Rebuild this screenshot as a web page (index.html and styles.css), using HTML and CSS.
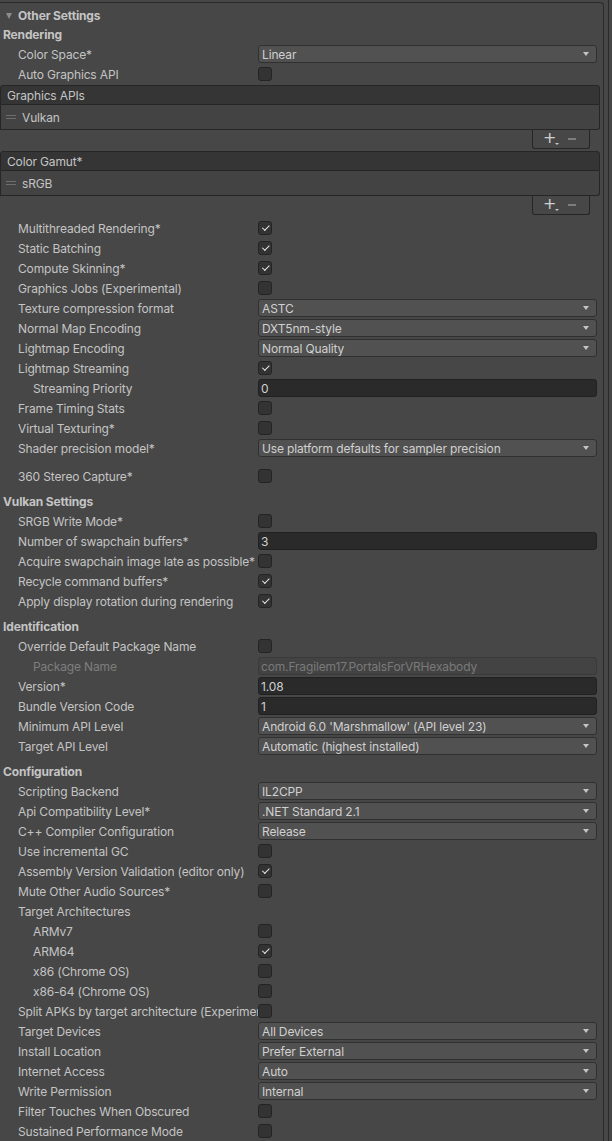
FILE: index.html
```html
<!DOCTYPE html>
<html>
<head>
<meta charset="utf-8">
<link rel="stylesheet" href="styles.css">
</head>
<body>
<div class="shell">
<div class="frame">
  <div class="foldout"><span class="tri"></span>Other Settings</div>
  <div class="section first">Rendering</div>
  <div class="row"><span class="label">Color Space*</span><div class="dd">Linear</div></div>
  <div class="row"><span class="label">Auto Graphics API</span><span class="cb"></span></div>

  <div class="list l1">
    <div class="list-head">Graphics APIs</div>
    <div class="list-body"><span class="handle"></span>Vulkan</div>
    <div class="list-foot"><span class="plus">+<i></i></span><span class="minus"></span></div>
  </div>
  <div class="list l2">
    <div class="list-head">Color Gamut*</div>
    <div class="list-body"><span class="handle"></span>sRGB</div>
    <div class="list-foot"><span class="plus">+<i></i></span><span class="minus"></span></div>
  </div>

  <div class="row after-list"><span class="label">Multithreaded Rendering*</span><span class="cb on"></span></div>
  <div class="row"><span class="label">Static Batching</span><span class="cb on"></span></div>
  <div class="row"><span class="label">Compute Skinning*</span><span class="cb on"></span></div>
  <div class="row"><span class="label">Graphics Jobs (Experimental)</span><span class="cb"></span></div>
  <div class="row"><span class="label">Texture compression format</span><div class="dd">ASTC</div></div>
  <div class="row"><span class="label">Normal Map Encoding</span><div class="dd">DXT5nm-style</div></div>
  <div class="row"><span class="label">Lightmap Encoding</span><div class="dd">Normal Quality</div></div>
  <div class="row"><span class="label">Lightmap Streaming</span><span class="cb on"></span></div>
  <div class="row"><span class="label indent">Streaming Priority</span><div class="tf">0</div></div>
  <div class="row"><span class="label">Frame Timing Stats</span><span class="cb"></span></div>
  <div class="row"><span class="label">Virtual Texturing*</span><span class="cb"></span></div>
  <div class="row"><span class="label">Shader precision model*</span><div class="dd">Use platform defaults for sampler precision</div></div>
  <div class="row gap"><span class="label">360 Stereo Capture*</span><span class="cb"></span></div>

  <div class="section">Vulkan Settings</div>
  <div class="row"><span class="label">SRGB Write Mode*</span><span class="cb"></span></div>
  <div class="row"><span class="label">Number of swapchain buffers*</span><div class="tf">3</div></div>
  <div class="row"><span class="label">Acquire swapchain image late as possible*</span><span class="cb"></span></div>
  <div class="row"><span class="label">Recycle command buffers*</span><span class="cb on"></span></div>
  <div class="row"><span class="label">Apply display rotation during rendering</span><span class="cb on"></span></div>

  <div class="section">Identification</div>
  <div class="row"><span class="label">Override Default Package Name</span><span class="cb"></span></div>
  <div class="row"><span class="label indent dim">Package Name</span><div class="tf disabled">com.Fragilem17.PortalsForVRHexabody</div></div>
  <div class="row"><span class="label">Version*</span><div class="tf">1.08</div></div>
  <div class="row"><span class="label">Bundle Version Code</span><div class="tf">1</div></div>
  <div class="row"><span class="label">Minimum API Level</span><div class="dd">Android 6.0 'Marshmallow' (API level 23)</div></div>
  <div class="row"><span class="label">Target API Level</span><div class="dd">Automatic (highest installed)</div></div>

  <div class="section">Configuration</div>
  <div class="row"><span class="label">Scripting Backend</span><div class="dd">IL2CPP</div></div>
  <div class="row"><span class="label">Api Compatibility Level*</span><div class="dd">.NET Standard 2.1</div></div>
  <div class="row"><span class="label">C++ Compiler Configuration</span><div class="dd">Release</div></div>
  <div class="row"><span class="label">Use incremental GC</span><span class="cb"></span></div>
  <div class="row"><span class="label">Assembly Version Validation (editor only)</span><span class="cb on"></span></div>
  <div class="row"><span class="label">Mute Other Audio Sources*</span><span class="cb"></span></div>
  <div class="row"><span class="label">Target Architectures</span></div>
  <div class="row"><span class="label indent">ARMv7</span><span class="cb"></span></div>
  <div class="row"><span class="label indent">ARM64</span><span class="cb on"></span></div>
  <div class="row"><span class="label indent">x86 (Chrome OS)</span><span class="cb"></span></div>
  <div class="row"><span class="label indent">x86-64 (Chrome OS)</span><span class="cb"></span></div>
  <div class="row"><span class="label">Split APKs by target architecture (Experimental)</span><span class="cb"></span></div>
  <div class="row"><span class="label">Target Devices</span><div class="dd">All Devices</div></div>
  <div class="row"><span class="label">Install Location</span><div class="dd">Prefer External</div></div>
  <div class="row"><span class="label">Internet Access</span><div class="dd">Auto</div></div>
  <div class="row"><span class="label">Write Permission</span><div class="dd">Internal</div></div>
  <div class="row"><span class="label">Filter Touches When Obscured</span><span class="cb"></span></div>
  <div class="row"><span class="label">Sustained Performance Mode</span><span class="cb"></span></div>
</div>
</div>
</body>
</html>
```
FILE: styles.css
```css
html, body {
  margin: 0;
  padding: 0;
  background: #474747;
}
body {
  font-family: Inter, "Noto Sans", "Liberation Sans", sans-serif;
  font-size: 12px;
  letter-spacing: -0.15px;
  color: #c4c4c4;
  overflow: hidden;
}
.shell {
  width: 608px;
  min-height: 1141px;
  border-right: 1px solid #2b2b2b;
  padding-top: 2px;
}
.frame {
  box-sizing: border-box;
  width: 604px;
  min-height: 1139px;
  border-top: 1px solid #2b2b2b;
  border-right: 1px solid #2b2b2b;
  border-top-right-radius: 4px;
  padding-top: 2px;
}
.foldout {
  height: 20px;
  display: flex;
  align-items: center;
  font-weight: 700;
  padding-left: 6px;
  color: #c4c4c4;
}
.tri {
  width: 0;
  height: 0;
  border-left: 3.5px solid transparent;
  border-right: 3.5px solid transparent;
  border-top: 6px solid #8c8c8c;
  margin-right: 6px;
  margin-top: 1px;
}
.section {
  height: 19px;
  display: flex;
  align-items: center;
  font-weight: 700;
  padding-left: 3px;
  margin-top: 6px;
}
.section.first { margin-top: 0; }
.row {
  height: 20px;
  display: flex;
  align-items: center;
}
.row.after-list { margin-top: 3px; }
.row.gap { margin-top: 8px; }
.label {
  box-sizing: border-box;
  width: 258px;
  flex: none;
  padding-left: 18px;
  white-space: nowrap;
  overflow: hidden;
}
.label.indent { padding-left: 33px; }
.label.dim { color: #7e7e7e; }
.dd, .tf {
  box-sizing: border-box;
  width: 339px;
  height: 18px;
  border-radius: 3px;
  display: flex;
  align-items: center;
  padding-left: 3px;
  white-space: nowrap;
  color: #d0d0d0;
}
.dd {
  position: relative;
  background: #515151;
  border: 1px solid #303030;
}
.dd::after {
  content: "";
  position: absolute;
  right: 7px;
  top: 6px;
  width: 0;
  height: 0;
  border-left: 3.5px solid transparent;
  border-right: 3.5px solid transparent;
  border-top: 4px solid #c4c4c4;
}
.tf {
  background: #2a2a2a;
  border: 1px solid #212121;
  padding-left: 2px;
}
.tf.disabled {
  background: #434343;
  border-color: #3a3a3a;
  color: #7a7a7a;
}
.cb {
  box-sizing: border-box;
  width: 14px;
  height: 14px;
  border-radius: 3px;
  background: #333333;
  border: 1px solid #242424;
  position: relative;
}
.cb.on::after {
  content: "";
  position: absolute;
  left: 3px;
  top: 2px;
  width: 6px;
  height: 3px;
  border-left: 1.6px solid #e6e6e6;
  border-bottom: 1.6px solid #e6e6e6;
  transform: rotate(-45deg) translate(-0.5px, 1px);
}
.list {
  width: 600px;
  display: flex;
  flex-direction: column;
}
.list.l1 { margin-top: 1px; }
.list.l2 { margin-top: 2px; }
.list-head {
  box-sizing: border-box;
  height: 20px;
  background: #353535;
  border: 1px solid #262626;
  border-top-left-radius: 3px;
  border-top-right-radius: 3px;
  display: flex;
  align-items: center;
  padding-left: 6px;
  padding-top: 1px;
  color: #c4c4c4;
}
.list-body {
  box-sizing: border-box;
  height: 25px;
  background: #434343;
  border: 1px solid #262626;
  border-top: none;
  border-bottom-right-radius: 3px;
  display: flex;
  align-items: center;
  padding-left: 5px;
}
.handle {
  width: 10px;
  height: 4px;
  border-top: 1px solid #6e6e6e;
  border-bottom: 1px solid #6e6e6e;
  margin-right: 6px;
  box-sizing: border-box;
}
.list-foot {
  box-sizing: border-box;
  align-self: flex-end;
  margin-right: 10px;
  width: 58px;
  height: 19px;
  border: 1px solid #262626;
  border-top: none;
  border-bottom-left-radius: 3px;
  border-bottom-right-radius: 3px;
  background: #474747;
  display: flex;
  align-items: center;
  padding-left: 10px;
  gap: 12px;
}
.plus {
  position: relative;
  font-size: 16px;
  line-height: 16px;
  color: #d0d0d0;
  font-family: "DejaVu Sans", sans-serif;
  margin-top: -2px;
}
.plus i {
  position: absolute;
  right: -3px;
  bottom: 1px;
  width: 0;
  height: 0;
  border-left: 2px solid transparent;
  border-right: 2px solid transparent;
  border-top: 2px solid #c8c8c8;
}
.minus {
  width: 8px;
  height: 2px;
  background: #7c7c7c;
}
```
